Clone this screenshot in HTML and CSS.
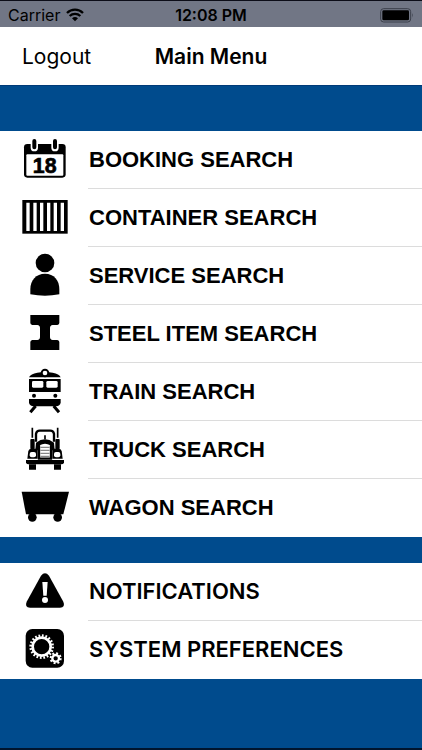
FILE: index.html
```html
<!DOCTYPE html>
<html lang="en">
<head>
    <meta charset="UTF-8">
    <meta name="viewport" content="width=device-width, initial-scale=1.0">
    <title>Main Menu</title>
    <link rel="stylesheet" href="styles.css">
</head>
<body>
    <div class="status-bar">
        <div class="carrier">
            <span>Carrier</span>
            <svg class="wifi" viewBox="0 0 54 40" aria-hidden="true">
                <path d="M3 14 A34 34 0 0 1 51 14" fill="none" stroke="#000" stroke-width="7"/>
                <path d="M11 23 A23 23 0 0 1 43 23" fill="none" stroke="#000" stroke-width="7"/>
                <path d="M18 30 A13 13 0 0 1 36 30 L27 39 Z"/>
            </svg>
        </div>
        <div class="clock">12:08 PM</div>
        <div class="power">
            <svg class="battery" viewBox="0 0 102 45" aria-hidden="true">
                <rect x="2" y="2" width="90" height="40" rx="9" fill="none" stroke="#3b3f4a" stroke-width="3"/>
                <rect x="7" y="7" width="80" height="30" rx="4"/>
                <path d="M96 15 Q101 22 96 29 Z" fill="#3b3f4a"/>
            </svg>
        </div>
    </div>

    <header class="nav-bar">
        <button type="button" class="logout">Logout</button>
        <h1 class="title">Main Menu</h1>
    </header>

    <main class="content">
        <nav class="menu" aria-label="Search">
            <a class="item" href="#booking">
                <svg class="icon" viewBox="0 0 150 150" aria-hidden="true">
                    <rect x="12" y="27" width="125" height="101" rx="10"/>
                    <rect x="19" y="58" width="111" height="64" rx="3" fill="#fff"/>
                    <path d="M43 20 V38 M105 20 V38" stroke="#fff" stroke-width="22" stroke-linecap="round"/>
                    <path d="M43 18 V37 M105 18 V37" stroke="#000" stroke-width="12" stroke-linecap="round"/>
                    <text class="day" x="74" y="113" text-anchor="middle">18</text>
                </svg>
                <span class="label">BOOKING SEARCH</span>
            </a>
            <a class="item" href="#container">
                <svg class="icon" viewBox="0 0 150 150" aria-hidden="true">
                    <rect x="7" y="21" width="136" height="101"/>
                    <path d="M24 29 V114 M45 29 V114 M65 29 V114 M86 29 V114 M106 29 V114 M127 29 V114" stroke="#fff" stroke-width="10"/>
                </svg>
                <span class="label">CONTAINER SEARCH</span>
            </a>
            <a class="item" href="#service">
                <svg class="icon" viewBox="0 0 150 150" aria-hidden="true">
                    <circle cx="75" cy="36" r="28"/>
                    <path d="M31 130 V114 C31 88 48 68 75 68 C102 68 118 88 118 114 V130 Q75 138 31 130 Z"/>
                </svg>
                <span class="label">SERVICE SEARCH</span>
            </a>
            <a class="item" href="#steel">
                <svg class="icon" viewBox="0 0 150 150" aria-hidden="true">
                    <path d="M31 18 H118 V42 Q118 47 112 48 H98 Q90 49 90 57 V84 Q90 92 98 93 H112 Q118 94 118 99 V123 H31 V99 Q31 94 37 93 H52 Q60 92 60 84 V57 Q60 49 52 48 H37 Q31 47 31 42 Z"/>
                </svg>
                <span class="label">STEEL ITEM SEARCH</span>
            </a>
            <a class="item" href="#train">
                <svg class="icon" viewBox="0 0 150 150" aria-hidden="true">
                    <path d="M27 31 Q32 20 52 17 Q75 13 98 17 Q118 20 122 31 Z"/>
                    <circle cx="75" cy="18" r="10" fill="#fff" stroke="#000" stroke-width="6"/>
                    <rect x="27" y="36" width="95" height="39"/>
                    <rect x="36" y="42" width="34" height="20" rx="4" fill="#fff"/>
                    <rect x="79" y="42" width="34" height="20" rx="4" fill="#fff"/>
                    <circle cx="42" cy="86" r="6"/>
                    <circle cx="106" cy="86" r="6"/>
                    <path d="M27 96 H122 V107 Q120 117 108 118 H41 Q29 117 27 107 Z"/>
                    <path d="M47 117 L31 136 M101 117 L117 136" stroke="#000" stroke-width="9"/>
                </svg>
                <span class="label">TRAIN SEARCH</span>
            </a>
            <a class="item" href="#truck">
                <svg class="icon" viewBox="0 0 150 150" aria-hidden="true">
                    <path d="M37 8 V38 M113 8 V38" stroke="#000" stroke-width="5"/>
                    <rect x="31" y="42" width="13" height="31" rx="3"/>
                    <rect x="106" y="42" width="13" height="31" rx="3"/>
                    <path d="M48 50 V26 Q50 17 59 17 H91 Q100 17 102 26 V50" fill="none" stroke="#000" stroke-width="7"/>
                    <path d="M75 31 V43" stroke="#000" stroke-width="5"/>
                    <path d="M48 53 Q75 33 102 53 L104 76 H46 Z"/>
                    <path d="M57 58 Q75 48 93 58 V101 H57 Z" fill="#fff" stroke="#000" stroke-width="7"/>
                    <path d="M61 67 H89 M61 76 H89 M61 85 H89 M61 94 H89" stroke="#888" stroke-width="4"/>
                    <path d="M25 78 Q27 71 35 71 H53 V101 H22 Z"/>
                    <path d="M125 78 Q123 71 115 71 H97 V101 H128 Z"/>
                    <rect x="29" y="81" width="19" height="16" rx="6" fill="#fff"/>
                    <rect x="102" y="81" width="19" height="16" rx="6" fill="#fff"/>
                    <path d="M18 105 H132 V113 Q130 118 124 118 H26 Q20 118 18 113 Z"/>
                    <path d="M27 118 H48 V134 H27 Z M102 118 H123 V134 H102 Z"/>
                </svg>
                <span class="label">TRUCK SEARCH</span>
            </a>
            <a class="item" href="#wagon">
                <svg class="icon" viewBox="0 0 150 150" aria-hidden="true">
                    <path d="M5 26 H147 L130 94 H18 Z"/>
                    <circle cx="37" cy="103" r="13"/>
                    <circle cx="113" cy="103" r="13"/>
                </svg>
                <span class="label">WAGON SEARCH</span>
            </a>
        </nav>

        <nav class="menu menu-system" aria-label="System">
            <a class="item" href="#notifications">
                <svg class="icon" viewBox="0 0 150 150" aria-hidden="true">
                    <path d="M63 26 Q75 12 87 26 L130 104 Q137 121 120 122 H30 Q13 121 20 104 Z"/>
                    <path d="M67 45 H83 L80 86 H70 Z" fill="#fff"/>
                    <circle cx="75" cy="99" r="9" fill="#fff"/>
                </svg>
                <span class="label">NOTIFICATIONS</span>
            </a>
            <a class="item" href="#preferences">
                <svg class="icon" viewBox="0 0 150 150" aria-hidden="true">
                    <rect x="17" y="12" width="115" height="116" rx="20"/>
                    <circle cx="65" cy="65" r="27" fill="none" stroke="#fff" stroke-width="8"/>
                    <circle cx="65" cy="65" r="33" fill="none" stroke="#fff" stroke-width="8" pathLength="40" stroke-dasharray="1 1"/>
                    <circle cx="107" cy="100" r="10" fill="none" stroke="#fff" stroke-width="7"/>
                    <circle cx="107" cy="100" r="15" fill="none" stroke="#fff" stroke-width="6" pathLength="16" stroke-dasharray="1 1"/>
                </svg>
                <span class="label">SYSTEM PREFERENCES</span>
            </a>
        </nav>
    </main>
</body>
</html>
```

FILE: styles.css
```css
* {
    box-sizing: border-box;
}
body {
    display: flex;
    flex-direction: column;
    min-height: 100vh;
    margin: 0;
    font-family: Inter, "Liberation Sans", sans-serif;
    color: #000;
    background-color: #004b8d;
    border-bottom: 2px solid #00152e;
}
.status-bar {
    display: grid;
    grid-template-columns: 1fr auto 1fr;
    align-items: center;
    height: 27px;
    padding: 2px 8px 0;
    font-size: 16px;
    background-color: #717685;
    border-top: 1px solid #0c0d18;
}
.carrier {
    display: flex;
    align-items: center;
    gap: 6px;
}
.wifi {
    width: 18px;
    height: 14px;
}
.clock {
    font-weight: 600;
}
.power {
    display: flex;
    justify-content: flex-end;
}
.battery {
    width: 34px;
    height: 15px;
}
.nav-bar {
    display: grid;
    grid-template-columns: 1fr auto 1fr;
    align-items: center;
    height: 58px;
    padding: 0 22px;
    background-color: #fff;
}
.logout {
    justify-self: start;
    padding: 0;
    border: none;
    background: none;
    font: inherit;
    font-size: 21px;
    color: inherit;
}
.title {
    margin: 0;
    font-size: 21px;
    font-weight: 600;
}
.content {
    display: flex;
    flex-direction: column;
    flex: 1;
    gap: 26px;
    padding-top: 45px;
    border-top: 1px solid #003a78;
}
.menu {
    background-color: #fff;
    font-family: "Liberation Sans", Arial, sans-serif;
    font-size: 22px;
    font-weight: bold;
}
.menu-system {
    font-family: Inter, "Liberation Sans", sans-serif;
    font-weight: 600;
}
.item {
    display: flex;
    align-items: center;
    height: 58px;
    padding-left: 20px;
    gap: 18px;
    color: inherit;
    text-decoration: none;
}
.icon {
    flex: none;
    width: 50px;
    height: 50px;
}
.day {
    font-family: "Liberation Sans", Arial, sans-serif;
    font-size: 64px;
    font-weight: bold;
    stroke: #000;
    stroke-width: 2px;
}
.label {
    flex: 1;
    padding-left: 1px;
    line-height: 57px;
    border-bottom: 1px solid #dcdcdc;
}
.item:last-child .label {
    border-bottom-color: transparent;
}
```
